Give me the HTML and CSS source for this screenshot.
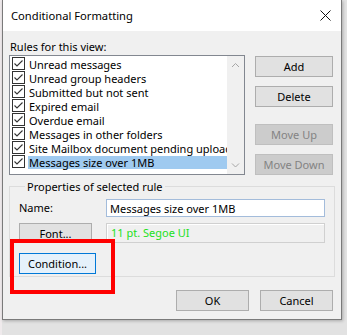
FILE: index.html
```html
<!DOCTYPE html>
<html lang="en">
<head>
    <meta charset="UTF-8">
    <title>Conditional Formatting</title>
    <link rel="stylesheet" href="styles.css">
</head>
<body>
<div class="screen">
    <div class="dialog">
        <div class="titlebar">
            <span class="title">Conditional Formatting</span>
            <svg class="close" width="11" height="11" viewBox="0 0 11 11">
                <path d="M0.5 0.5 L10.5 10.5 M10.5 0.5 L0.5 10.5" stroke="#111" stroke-width="1" fill="none"/>
            </svg>
        </div>

        <div class="content">
            <div class="caption">Rules for this view:</div>

            <div class="rules-row">
                <div class="listbox">
                    <ul class="rules">
                        <li class="rule"><span class="check"><svg width="13" height="13" viewBox="0 0 13 13"><rect x="0.5" y="0.5" width="12" height="12" fill="#fff" stroke="#333"/><polyline points="2.5,6.5 5,9 10.5,3.5" fill="none" stroke="#333" stroke-width="1.1"/></svg></span><span class="rule-name">Unread messages</span></li>
                        <li class="rule"><span class="check"><svg width="13" height="13" viewBox="0 0 13 13"><rect x="0.5" y="0.5" width="12" height="12" fill="#fff" stroke="#333"/><polyline points="2.5,6.5 5,9 10.5,3.5" fill="none" stroke="#333" stroke-width="1.1"/></svg></span><span class="rule-name">Unread group headers</span></li>
                        <li class="rule"><span class="check"><svg width="13" height="13" viewBox="0 0 13 13"><rect x="0.5" y="0.5" width="12" height="12" fill="#fff" stroke="#333"/><polyline points="2.5,6.5 5,9 10.5,3.5" fill="none" stroke="#333" stroke-width="1.1"/></svg></span><span class="rule-name">Submitted but not sent</span></li>
                        <li class="rule"><span class="check"><svg width="13" height="13" viewBox="0 0 13 13"><rect x="0.5" y="0.5" width="12" height="12" fill="#fff" stroke="#333"/><polyline points="2.5,6.5 5,9 10.5,3.5" fill="none" stroke="#333" stroke-width="1.1"/></svg></span><span class="rule-name">Expired email</span></li>
                        <li class="rule"><span class="check"><svg width="13" height="13" viewBox="0 0 13 13"><rect x="0.5" y="0.5" width="12" height="12" fill="#fff" stroke="#333"/><polyline points="2.5,6.5 5,9 10.5,3.5" fill="none" stroke="#333" stroke-width="1.1"/></svg></span><span class="rule-name">Overdue email</span></li>
                        <li class="rule"><span class="check"><svg width="13" height="13" viewBox="0 0 13 13"><rect x="0.5" y="0.5" width="12" height="12" fill="#fff" stroke="#333"/><polyline points="2.5,6.5 5,9 10.5,3.5" fill="none" stroke="#333" stroke-width="1.1"/></svg></span><span class="rule-name">Messages in other folders</span></li>
                        <li class="rule"><span class="check"><svg width="13" height="13" viewBox="0 0 13 13"><rect x="0.5" y="0.5" width="12" height="12" fill="#fff" stroke="#333"/><polyline points="2.5,6.5 5,9 10.5,3.5" fill="none" stroke="#333" stroke-width="1.1"/></svg></span><span class="rule-name">Site Mailbox document pending upload</span></li>
                        <li class="rule selected"><span class="check"><svg width="13" height="13" viewBox="0 0 13 13"><rect x="0.5" y="0.5" width="12" height="12" fill="#fff" stroke="#333"/><polyline points="2.5,6.5 5,9 10.5,3.5" fill="none" stroke="#333" stroke-width="1.1"/></svg></span><span class="rule-name">Messages size over 1MB</span></li>
                    </ul>
                    <div class="scrollbar">
                        <svg width="17" height="17" viewBox="0 0 17 17"><polyline points="5,11 8.5,7.5 12,11" fill="none" stroke="#a6a6a6" stroke-width="1"/></svg>
                        <svg width="17" height="17" viewBox="0 0 17 17"><polyline points="5,6.5 8.5,10 12,6.5" fill="none" stroke="#a6a6a6" stroke-width="1"/></svg>
                    </div>
                </div>

                <div class="side-buttons">
                    <button class="btn">Add</button>
                    <button class="btn">Delete</button>
                    <button class="btn move-up" disabled>Move Up</button>
                    <button class="btn" disabled>Move Down</button>
                </div>
            </div>

            <fieldset class="props">
                <legend>Properties of selected rule</legend>
                <div class="prop-grid">
                    <label for="rule-name" class="prop-label">Name:</label>
                    <input type="text" id="rule-name" class="text-field" value="Messages size over 1MB">
                    <button class="btn font-btn">Font...</button>
                    <div class="font-sample">11 pt. Segoe UI</div>
                    <button class="btn condition-btn">Condition...</button>
                </div>
            </fieldset>

            <div class="footer">
                <button class="btn">OK</button>
                <button class="btn">Cancel</button>
            </div>
        </div>

        <div class="callout"></div>
    </div>
</div>
</body>
</html>
```

FILE: styles.css
```css
body {
    margin: 0;
    background-color: #e4e4e4;
    font-family: "Noto Sans", "Liberation Sans", sans-serif;
    font-size: 11px;
    color: #000;
}

.screen {
    width: 347px;
    height: 335px;
    overflow: hidden;
    padding-left: 2px;
    box-sizing: border-box;
    background: linear-gradient(to right, #efeaec 0, #efeaec 2px, #e2e2e2 2px);
}

.dialog {
    position: relative;
    width: 340px;
    background-color: #f0f0f0;
    border: 1px solid #7a7a7a;
    border-top: none;
    box-sizing: border-box;
    box-shadow: 1px 1px 3px rgba(0, 0, 0, 0.25);
}

.titlebar {
    height: 31px;
    background-color: #fff;
    display: flex;
    align-items: center;
    justify-content: space-between;
    padding: 0 10px 0 8px;
}

.title {
    font-size: 11.2px;
    padding-bottom: 1px;
}

.close {
    display: block;
}

.content {
    padding: 8px 8px 8px 6px;
}

.caption {
    line-height: 15px;
    margin-left: 1px;
    margin-bottom: 1px;
}

.rules-row {
    display: flex;
    gap: 10px;
}

.listbox {
    width: 236px;
    height: 120px;
    box-sizing: border-box;
    border: 1px solid #828790;
    background-color: #fff;
    display: flex;
}

.rules {
    list-style: none;
    margin: 0;
    padding: 1px 0 0 2px;
    flex: 1;
    min-width: 0;
}

.rule {
    display: flex;
    height: 14px;
    gap: 3px;
}

.check svg {
    display: block;
}

.rule-name {
    flex: 1;
    min-width: 0;
    white-space: nowrap;
    overflow-x: clip;
    overflow-y: visible;
    line-height: 13px;
    height: 13px;
    margin-top: 1px;
    padding-left: 1px;
}

.rule.selected .rule-name {
    background-color: #9fcaf0;
}

.scrollbar {
    width: 17px;
    background-color: #f0f0f0;
    display: flex;
    flex-direction: column;
    justify-content: space-between;
}

.scrollbar svg {
    display: block;
}

.side-buttons {
    display: flex;
    flex-direction: column;
    gap: 9px;
    padding-top: 1px;
}

.btn {
    font-family: inherit;
    font-size: 11px;
    color: #000;
    height: 21px;
    padding: 0;
    background-color: #e1e1e1;
    border: 1px solid #adadad;
    box-sizing: border-box;
}

.side-buttons .btn {
    width: 78px;
}

.btn:disabled {
    background-color: #cccccc;
    border-color: #bfbfbf;
    color: #838383;
}

.move-up {
    margin-top: 8px;
}

.props {
    margin: 4px -2px 0 0;
    padding: 5px 9px 6px 9px;
    border: 1px solid #dcdcdc;
    min-width: 0;
}

.props legend {
    padding: 0 2px;
    margin-left: 6px;
    line-height: 15px;
}

.prop-grid {
    display: grid;
    grid-template-columns: 87px 219px;
    grid-template-rows: 18px 20px 21px;
    row-gap: 6px;
    align-items: center;
}

.prop-label {
    line-height: 18px;
}

.text-field {
    font-family: inherit;
    font-size: 11px;
    height: 18px;
    width: 219px;
    box-sizing: border-box;
    border: 1px solid #a3bcdb;
    padding: 0 3px;
    margin: 0;
    outline: none;
}

.font-btn {
    width: 73px;
    height: 20px;
}

.font-sample {
    height: 20px;
    box-sizing: border-box;
    border: 1px solid #d0d0d0;
    box-shadow: inset 1px 1px 0 #fff;
    padding-left: 4px;
    line-height: 18px;
    color: #22e022;
}

.condition-btn {
    width: 77px;
    margin-top: 8px;
    background-color: #e5f1fb;
    border-color: #0078d7;
}

.prop-grid .condition-btn {
    grid-column: 1 / 3;
}

.footer {
    display: flex;
    justify-content: flex-end;
    gap: 11px;
    margin-top: 13px;
}

.footer .btn {
    width: 73px;
}

.callout {
    position: absolute;
    left: 7px;
    top: 239px;
    width: 105px;
    height: 55px;
    box-sizing: border-box;
    border: 4px solid #ff0000;
}
```
